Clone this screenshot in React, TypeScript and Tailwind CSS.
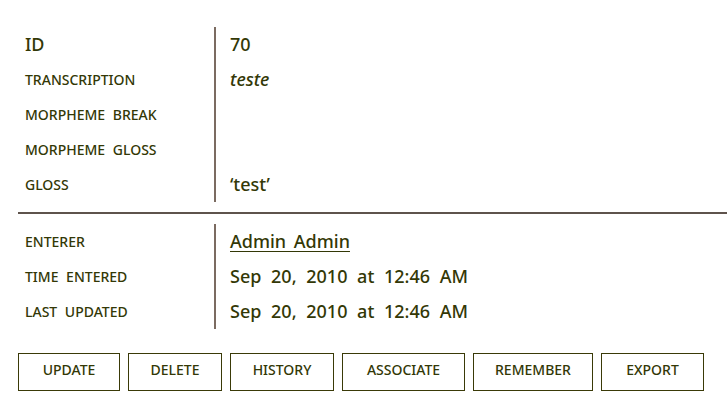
import React from 'react';

const font = { fontFamily: '"Noto Sans", "Open Sans", sans-serif' };

const topRows = [
  { label: 'ID', value: '70', big: true },
  { label: 'TRANSCRIPTION', value: 'teste', italic: true },
  { label: 'MORPHEME BREAK', value: '' },
  { label: 'MORPHEME GLOSS', value: '' },
  { label: 'GLOSS', value: '‘test’' },
];

const buttons = [
  { label: 'UPDATE', w: 'w-[102px]' },
  { label: 'DELETE', w: 'w-[94px]' },
  { label: 'HISTORY', w: 'w-[104px]' },
  { label: 'ASSOCIATE', w: 'w-[123px]' },
  { label: 'REMEMBER', w: 'w-[120px]' },
  { label: 'EXPORT', w: 'w-[103px]' },
];

function Label({ children, big }: { children: React.ReactNode; big?: boolean }) {
  return (
    <div
      className={`h-[35px] flex items-center pl-[7px] pb-[1px] font-medium ${big ? 'text-[18px]' : 'text-[14px]'} [word-spacing:4px]`}
    >
      {children}
    </div>
  );
}

export default function App() {
  return (
    <div className="w-[727px] h-[412px] bg-white text-[#333806] pt-[27px]" style={font}>
      <div className="flex pl-[18px]">
        <div className="w-[196px]">
          {topRows.map((r) => (
            <Label key={r.label} big={r.big}>{r.label}</Label>
          ))}
        </div>
        <div className="w-[2px] bg-[#7b6b61]" />
        <div className="pl-[14px]">
          {topRows.map((r) => (
            <div
              key={r.label}
              className={`h-[35px] flex items-center text-[18px] font-medium ${r.italic ? 'italic' : ''}`}
            >
              {r.value}
            </div>
          ))}
        </div>
      </div>

      <div className="ml-[18px] mt-[10px] h-[2px] bg-[#5e534c]" />

      <div className="flex pl-[18px] mt-[10px]">
        <div className="w-[196px]">
          <Label>ENTERER</Label>
          <Label>TIME ENTERED</Label>
          <Label>LAST UPDATED</Label>
        </div>
        <div className="w-[2px] bg-[#7b6b61]" />
        <div className="pl-[14px] text-[18px] font-medium [word-spacing:5px]">
          <div className="h-[35px] flex items-center">
            <a href="#" className="underline underline-offset-[3px] [word-spacing:3px]">Admin Admin</a>
          </div>
          <div className="h-[35px] flex items-center">Sep 20, 2010 at 12:46 AM</div>
          <div className="h-[35px] flex items-center">Sep 20, 2010 at 12:46 AM</div>
        </div>
      </div>

      <div className="flex gap-[8px] pl-[18px] mt-[24px]">
        {buttons.map((b) => (
          <button
            key={b.label}
            className={`${b.w} h-[38px] pb-[5px] border-[1.5px] border-[#3a3a08] text-[14px] font-medium text-[#333806] bg-white`}
          >
            {b.label}
          </button>
        ))}
      </div>
    </div>
  );
}
